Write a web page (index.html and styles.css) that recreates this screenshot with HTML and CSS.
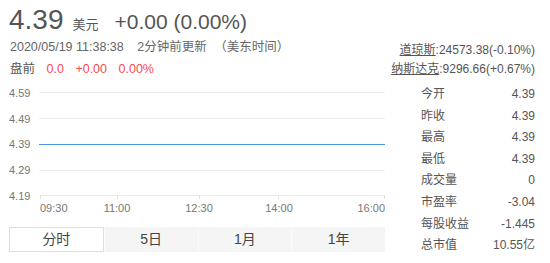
FILE: index.html
```html
<!DOCTYPE html>
<html lang="zh-CN">
<head>
  <meta charset="UTF-8">
  <meta name="viewport" content="width=device-width, initial-scale=1.0">
  <title>4.39 美元</title>
  <link rel="stylesheet" href="styles.css">
</head>
<body>

  <div class="top">
    <div class="quote">
      <div class="price-line">
        <span class="price">4.39</span>
        <span class="unit">美元</span>
        <span class="change">+0.00 (0.00%)</span>
      </div>
      <div class="meta">
        <span>2020/05/19 11:38:38</span>
        <span class="updated">2分钟前更新</span>
        <span class="zone">（美东时间）</span>
      </div>
      <div class="pre">
        <span class="pre-label">盘前</span>
        <span class="up">0.0</span>
        <span class="up">+0.00</span>
        <span class="up">0.00%</span>
      </div>
    </div>
    <div class="indices">
      <div><a href="#">道琼斯</a>:24573.38(-0.10%)</div>
      <div><a href="#">纳斯达克</a>:9296.66(+0.67%)</div>
    </div>
  </div>

  <div class="main">
    <div class="chart-col">
      <svg class="chart" width="376" height="132" viewBox="0 0 376 132">
        <!-- grid -->
        <g class="grid">
          <line x1="30" y1="8.5" x2="376" y2="8.5"/>
          <line x1="30" y1="34.5" x2="376" y2="34.5"/>
          <line x1="30" y1="86.5" x2="376" y2="86.5"/>
          <line x1="30" y1="111.5" x2="376" y2="111.5"/>
        </g>
        <g class="ticks">
          <line x1="31.5" y1="111" x2="31.5" y2="115"/>
          <line x1="108.5" y1="111" x2="108.5" y2="115"/>
          <line x1="190.5" y1="111" x2="190.5" y2="115"/>
          <line x1="269.5" y1="111" x2="269.5" y2="115"/>
          <line x1="375.5" y1="111" x2="375.5" y2="115"/>
        </g>
        <!-- price line -->
        <line class="price-path" x1="30" y1="60.5" x2="376" y2="60.5"/>
        <g class="y-labels">
          <text x="0" y="13">4.59</text>
          <text x="0" y="39">4.49</text>
          <text x="0" y="64">4.39</text>
          <text x="0" y="90">4.29</text>
          <text x="0" y="116">4.19</text>
        </g>
        <g class="x-labels">
          <text x="31" y="128">09:30</text>
          <text x="108" y="128" text-anchor="middle">11:00</text>
          <text x="190" y="128" text-anchor="middle">12:30</text>
          <text x="270" y="128" text-anchor="middle">14:00</text>
          <text x="376" y="128" text-anchor="end">16:00</text>
        </g>
      </svg>

      <div class="tabs">
        <div class="tab active">分时</div>
        <div class="tab">5日</div>
        <div class="tab">1月</div>
        <div class="tab">1年</div>
      </div>
    </div>

    <dl class="stats">
      <div class="row"><dt>今开</dt><dd>4.39</dd></div>
      <div class="row"><dt>昨收</dt><dd>4.39</dd></div>
      <div class="row"><dt>最高</dt><dd>4.39</dd></div>
      <div class="row"><dt>最低</dt><dd>4.39</dd></div>
      <div class="row"><dt>成交量</dt><dd>0</dd></div>
      <div class="row"><dt>市盈率</dt><dd>-3.04</dd></div>
      <div class="row"><dt>每股收益</dt><dd>-1.445</dd></div>
      <div class="row"><dt>总市值</dt><dd>10.55亿</dd></div>
    </dl>
  </div>

</body>
</html>
```

FILE: styles.css
```css
* {
  margin: 0;
  padding: 0;
  box-sizing: border-box;
}

body {
  font-family: "Liberation Sans", Arial, "Noto Sans CJK SC", sans-serif;
  background-color: #fff;
  color: #555;
  padding: 4px 15px 0 9px;
  width: 550px;
  height: 263px;
  overflow: hidden;
}

.top {
  display: flex;
  justify-content: space-between;
  align-items: flex-end;
}

.price-line {
  display: flex;
  align-items: baseline;
  height: 32px;
  line-height: 32px;
}

.price {
  font-size: 28px;
  color: #555;
}

.unit {
  font-size: 13px;
  margin-left: 9px;
  color: #555;
}

.change {
  font-size: 21px;
  margin-left: 16px;
  color: #555;
}

.meta {
  font-size: 12.5px;
  line-height: 22px;
  color: #666;
  padding-left: 1px;
}

.meta .updated {
  margin-left: 10px;
}

.meta .zone {
  margin-left: 4px;
}

.pre {
  font-size: 12.5px;
  line-height: 22px;
  padding-left: 1px;
}

.pre .up {
  color: #f54a51;
  margin-left: 8px;
}

.indices {
  font-size: 12px;
  line-height: 18.5px;
  text-align: right;
  color: #555;
  padding-bottom: 2px;
}

.indices a {
  color: #555;
  text-decoration: underline;
}

.main {
  display: flex;
  justify-content: space-between;
  margin-top: 4px;
}

.chart-col {
  width: 376px;
}

.chart {
  display: block;
}

.chart .grid line {
  stroke: #eee;
  stroke-width: 1;
}

.chart .ticks line {
  stroke: #e2e2e2;
  stroke-width: 1;
}

.chart .price-path {
  stroke: #4a95e8;
  stroke-width: 1.2;
}

.chart text {
  font-family: "Liberation Sans", Arial, sans-serif;
  font-size: 11px;
  fill: #777;
}

.tabs {
  display: flex;
  margin-top: 11px;
  height: 25px;
  background-color: #f5f5f5;
}

.tab {
  flex: 1;
  text-align: center;
  font-size: 14px;
  line-height: 25px;
  color: #444;
  border-left: 1px solid #fbfbfb;
}

.tab:first-child {
  border-left: none;
}

.tab.active {
  background-color: #fff;
  border: 1px solid #ddd;
  line-height: 23px;
}

.stats {
  width: 114px;
}

.stats .row {
  display: flex;
  justify-content: space-between;
  height: 21.6px;
  line-height: 21.6px;
  font-size: 12px;
}

.stats dt {
  color: #555;
}

.stats dd {
  color: #555;
}
```
